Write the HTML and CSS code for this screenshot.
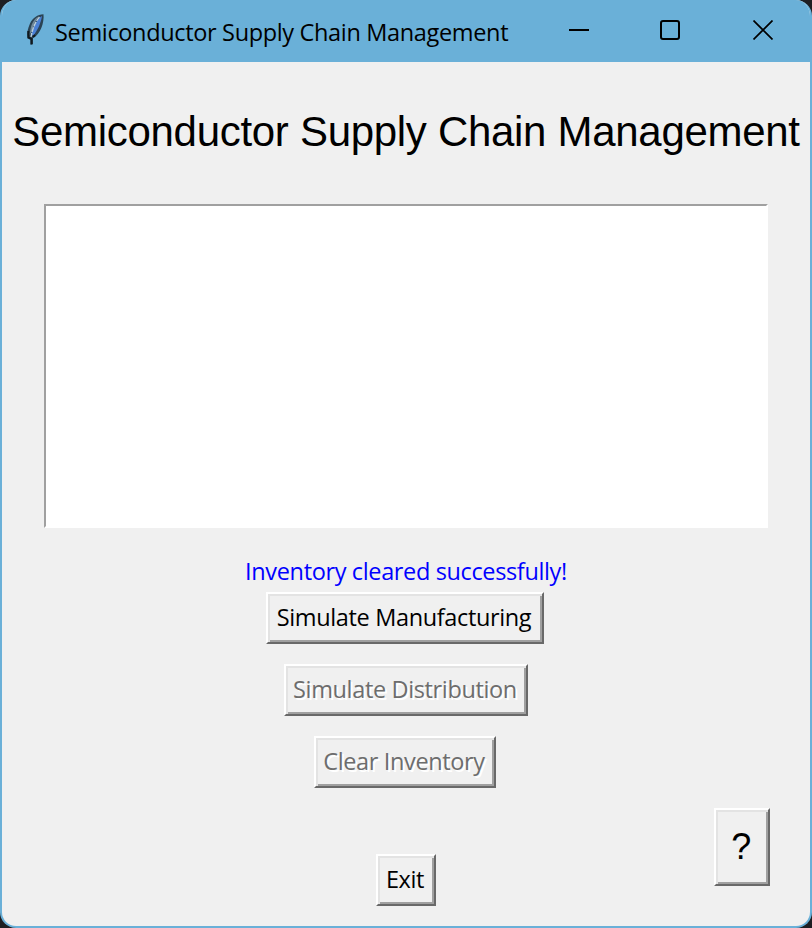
FILE: index.html
```
<!DOCTYPE html>
<html lang="en">
<head>
<meta charset="utf-8">
<title>Semiconductor Supply Chain Management</title>
<link rel="stylesheet" href="styles.css">
</head>
<body>
<div class="window">
  <header class="titlebar">
    <svg class="feather" width="20" height="34" viewBox="0 0 20 34">
      <path d="M19.500 1.200C13.500 1.500 8.500 5 6 10.500C4 15 2.500 20 3.800 24.500L6.500 26V31.500L9 31V25C12.500 23.500 15.500 19.500 17.500 14.500C19 10.500 20 5.500 19.500 1.200Z" fill="#2a4354"/>
      <path d="M18 3C17 9 14.500 16 9 23L7.500 21C9 14 13 6 18 3Z" fill="#4a80d6"/>
      <path d="M14.500 3.500C10 6 7.500 11 6.500 16L5.500 22L8 18C9.500 12 11.500 7 14.500 3.500Z" fill="#71899a"/>
      <path d="M15.500 4C11 9 8.500 16 7 24" fill="none" stroke="#b9cdda" stroke-width="1.400" stroke-dasharray="5 1"/>
      <path d="M4.300 18V24.500L7.500 26V31.500M9 24L11 22" fill="none" stroke="#10191e" stroke-width="2"/>
    </svg>
    <span class="caption">Semiconductor Supply Chain Management</span>
    <div class="controls">
      <svg width="20" height="20" viewBox="0 0 20 20"><path d="M0 10H20" stroke="#000" stroke-width="2"/></svg>
      <svg width="20" height="20" viewBox="0 0 20 20"><rect x="1" y="1" width="18" height="18" rx="2" fill="none" stroke="#000" stroke-width="2"/></svg>
      <svg width="20" height="20" viewBox="0 0 20 20"><path d="M.5 .5L19.500 19.500M19.500 .5L.5 19.500" stroke="#000" stroke-width="1.700"/></svg>
    </div>
  </header>
  <main class="content">
    <h1 class="heading">Semiconductor Supply Chain Management</h1>
    <div class="listbox"></div>
    <p class="status"><span>Inventory cleared successfully!</span></p>
    <div class="actions">
      <button class="button manufacture"><span>Simulate Manufacturing</span></button>
      <button class="button distribute" disabled><span>Simulate Distribution</span></button>
      <button class="button clear" disabled><span>Clear Inventory</span></button>
    </div>
    <div class="footer">
      <button class="button exit"><span>Exit</span></button>
      <button class="button help"><span>?</span></button>
    </div>
  </main>
</div>
</body>
</html>
```
FILE: styles.css
```
* { box-sizing: border-box; }
body { margin: 0; background: #1e1e22; font-family: "Open Sans", "Noto Sans", sans-serif; color: #000; }
.window {
  width: 812px;
  height: 928px;
  display: flex;
  flex-direction: column;
  background: #f0f0f0;
  border: 2px solid #6ab0d8;
  border-top: 0;
  border-radius: 16px;
  overflow: hidden;
}
.titlebar {
  height: 62px;
  flex: none;
  display: flex;
  align-items: center;
  background: #6ab0d8;
  padding: 0 37px 2px 22px;
}
.caption { margin: 4px 0 0 11px; font-size: 23.5px; line-height: 32px; letter-spacing: -0.34px; white-space: nowrap; }
.controls { display: flex; gap: 71px; margin-left: auto; }
.controls svg { display: block; }
.controls svg:last-child { margin-left: 2px; }
.content { flex: 1; display: flex; flex-direction: column; align-items: center; }
.heading {
  margin: 46px 0 0;
  height: 48px;
  font: 400 42px/48px "Liberation Sans", Arial, sans-serif;
  letter-spacing: -0.3px;
  white-space: nowrap;
}
.listbox {
  width: 724px;
  height: 324px;
  margin-top: 48px;
  background: #fff;
  border: 2px solid;
  border-color: #a0a0a0 #fff #fff #a0a0a0;
}
.status { margin: 27px 0 0; height: 32px; font-size: 23.5px; line-height: 32px; letter-spacing: -0.36px; color: #00f; white-space: nowrap; }
.actions { display: flex; flex-direction: column; align-items: center; gap: 20px; margin-top: 5px; }
.button {
  display: flex;
  align-items: center;
  justify-content: center;
  height: 52px;
  padding: 0 2px 2px 0;
  background: #f0f0f0;
  border: 2px solid;
  border-color: #fff #696969 #696969 #fff;
  border-radius: 0;
  box-shadow: inset 2px 2px #e3e3e3, inset -2px -2px #a0a0a0;
  color: #000;
  font-family: inherit;
  font-size: 23.5px;
  line-height: 32px;
  letter-spacing: -0.36px;
  white-space: nowrap;
}
.button:disabled { color: #6d6d6d; text-shadow: 2px 2px #fff; }
.manufacture { width: 278px; margin-right: 2px; }
.distribute { width: 244px; }
.clear { width: 182px; margin-right: 2px; }
.footer { width: 724px; height: 98px; margin-top: 20px; display: grid; grid-template-columns: 1fr 60px 1fr; }
.exit { grid-column: 2; align-self: end; }
.help { width: 56px; height: 78px; justify-self: end; margin-right: -2px; padding-bottom: 0; font: 36px/42px "Liberation Sans", Arial, sans-serif; }
```
